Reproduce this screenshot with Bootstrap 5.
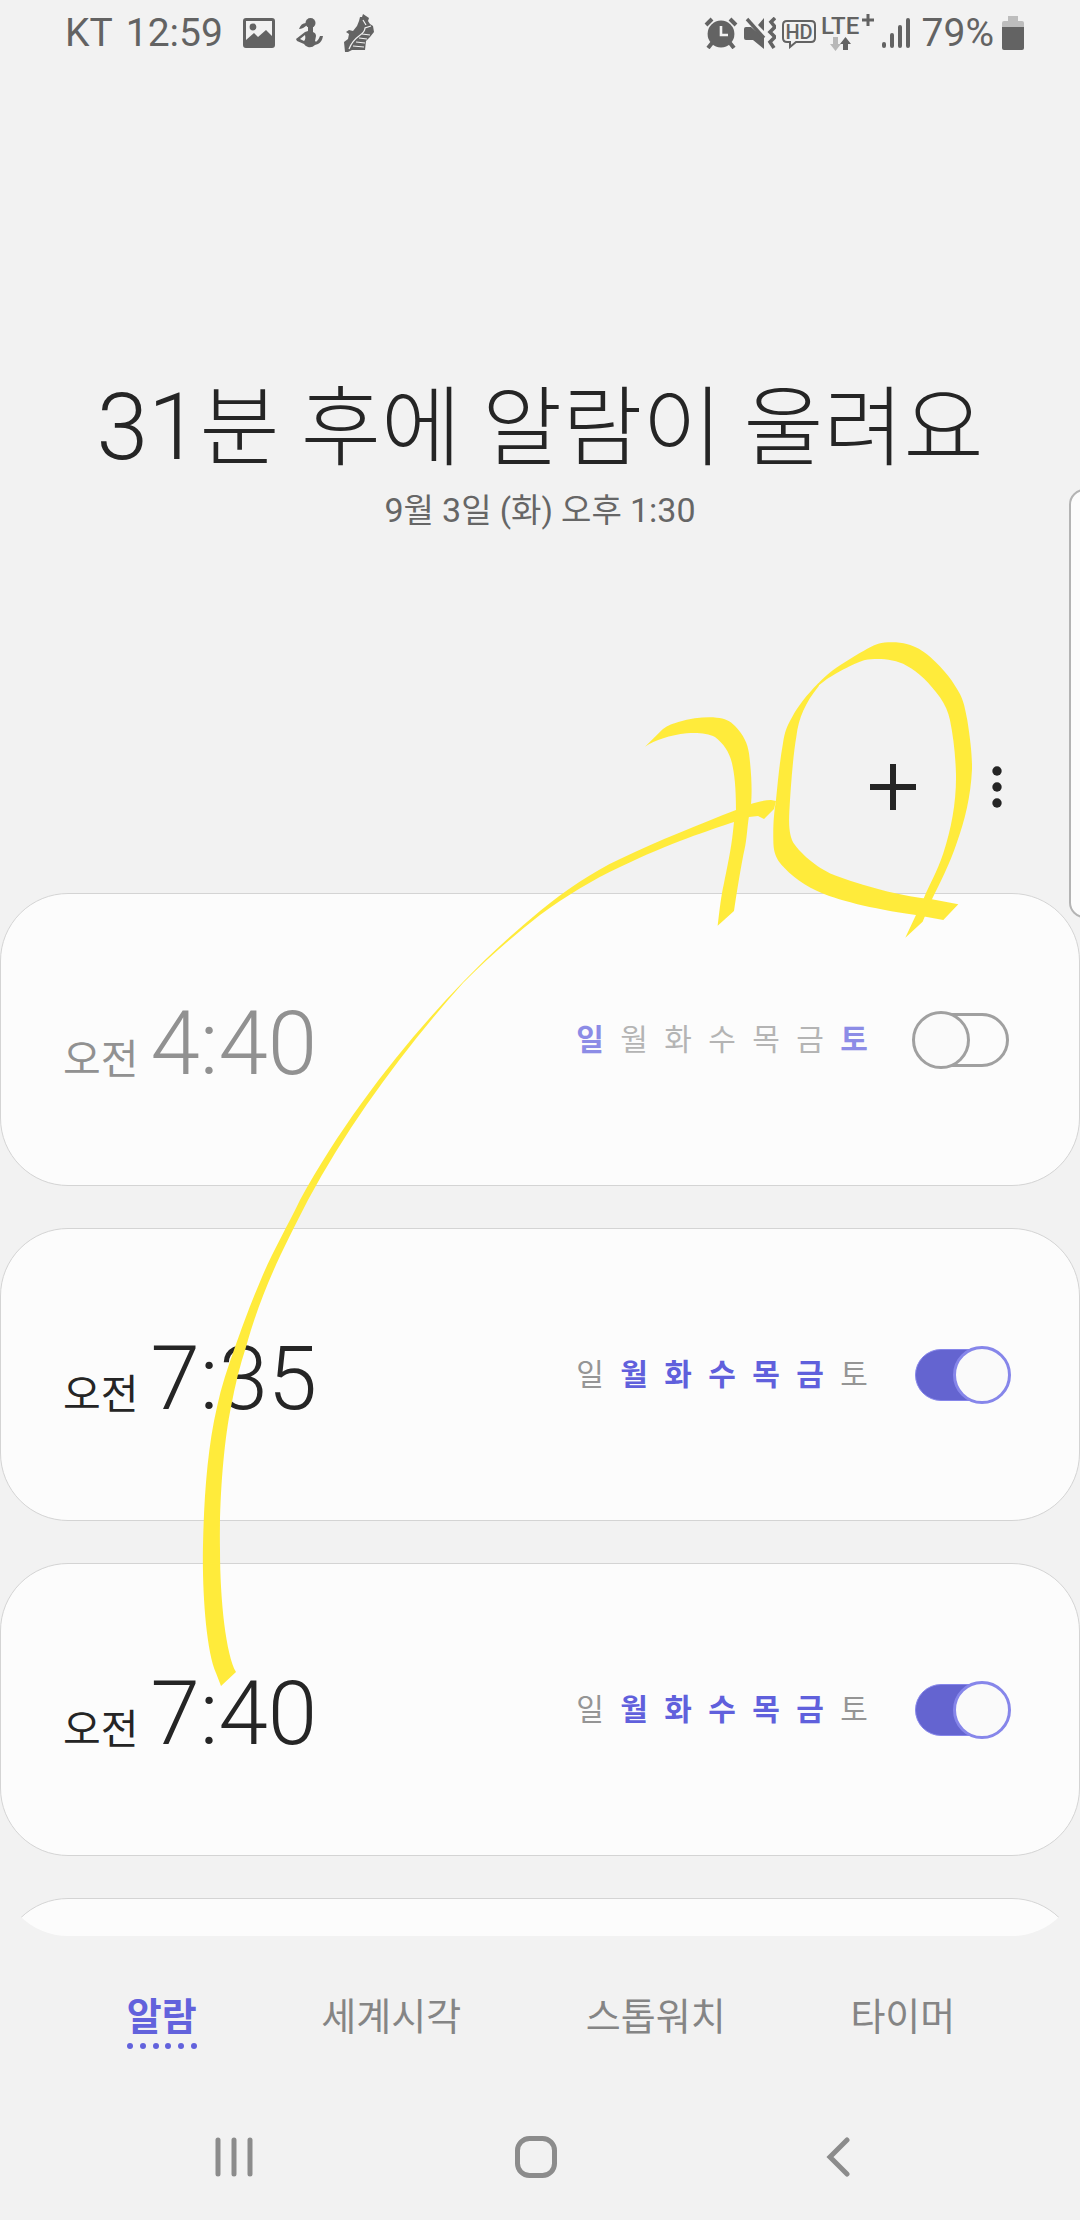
<!DOCTYPE html>
<html lang="ko">
<head>
<meta charset="utf-8">
<meta name="viewport" content="width=device-width, initial-scale=1">
<title>알람</title>
<link href="https://cdn.jsdelivr.net/npm/bootstrap@5.3.0/dist/css/bootstrap.min.css" rel="stylesheet">
<style>
  body { background: #f2f2f2; color: #252525; font-family: Roboto, "Noto Sans CJK KR", sans-serif; }
  svg { display: block; flex: none; }
  button svg { margin: auto; }
  .phone { overflow: hidden; }
  .status { height: 66px; padding: 0 56px 0 65px; color: #636363; font-size: 39px; line-height: 66px; }
  .carrier { margin-right: 13px; }
  .status-apps { gap: 21px; margin-left: 20px; }
  .status-radio { gap: 6px; margin-right: 12px; }
  .hero { padding-top: 303px; }
  .hero-title { font-size: 87px; line-height: 118px; font-weight: 300; }
  .hero-num { font-size: 93px; }
  .hero-date { font-size: 33px; line-height: 44px; color: #666; }
  .hero-date .date-num { font-size: 34px; }
  .tools { padding: 206px 47px 58px 0; gap: 32px; }
  .tool { width: 72px; height: 96px; color: #252525; }
  .alarm-list { min-height: 0; gap: 42px; border-radius: 0 0 68px 68px; }
  .alarm { height: 293px; flex: none; background: #fcfcfc; border: 1px solid #d4d4d4; border-radius: 68px; padding: 0 68px 0 62px; }
  .ampm { font-size: 41px; line-height: 100px; margin-right: 12px; }
  .clock { font-size: 89px; line-height: 100px; font-weight: 300; }
  .day { width: 44px; text-align: center; font-size: 30px; line-height: 44px; color: #959595; }
  .day-on { color: #6060dc; font-weight: 700; }
  .alarm-off { color: #919191; }
  .alarm-off .day { color: #b4b4b4; }
  .alarm-off .day-on { color: #8c8ce6; }
  .toggle { appearance: none; position: relative; width: 99px; height: 58px; margin: 0 0 0 36px; }
  .toggle::before { content: ""; position: absolute; inset: 2px 2px 2px 4px; border: 3px solid #a0a0a0; border-radius: 27px; }
  .toggle::after { content: ""; position: absolute; top: 0; left: 0; width: 58px; height: 58px; border: 3px solid #a0a0a0; border-radius: 50%; background: #fafafa; }
  .toggle:checked::before { inset: 3px; background: #6464d0; border: 1px solid #8686ea; }
  .toggle:checked::after { left: auto; right: 0; border-color: #8686ea; }
  .tabs { height: 168px; padding: 53px 0 0 2px; }
  .tab-item { font-size: 38px; line-height: 56px; color: #858585; text-decoration: none; }
  .tab-item svg { margin-top: -2px; }
  .tab-on { color: #6262dc; font-weight: 700; }
  .sysnav { height: 116px; padding: 17px 91px 27px 83px; color: #8c8c8c; }
  .sysbtn { height: 72px; color: inherit; }
  .edge { top: 489px; right: -20px; width: 31px; height: 429px; background: #fcfcfc; border: 2px solid #b4b4b4; border-radius: 16px; }
  .ink { pointer-events: none; fill: #ffeb3b; }
</style>
</head>
<body>
<div class="phone position-relative vh-100 d-flex flex-column">

  <header class="status d-flex align-items-center flex-shrink-0">
    <span class="carrier">KT</span>
    <span>12:59</span>
    <div class="status-apps d-flex align-items-center">
      <svg width="32" height="30" viewBox="0 0 32 30" fill="currentColor"><path fill-rule="evenodd" d="M3 0h26a3 3 0 0 1 3 3v24a3 3 0 0 1-3 3H3a3 3 0 0 1-3-3V3a3 3 0 0 1 3-3zM3 3v19l8-7 4 4 8-7 6 6V3z"/><circle cx="10" cy="9" r="3.4"/></svg>
      <svg width="27" height="30" viewBox="0 0 27 30" fill="currentColor"><ellipse cx="14.500" cy="5" rx="5" ry="5"/><path fill-rule="evenodd" d="M10 5Q5 5 3 11q4 0 8-4zM12 9h5v5q3 1 3 4l-1 5q1 1 2 0 2-2 3-5h3q-1 6-5 8l-3 1q-3 3-7 2-3-1-4-3L1 23l-1-2 9-7 3-1zM9 17l-5 4 4 2q2-2 1-6z"/></svg>
      <svg width="31" height="38" viewBox="0 0 31 38" fill="currentColor"><path d="M15 7l1-4 2 0 1-3 3 2 3 2-1 3 2 3 3 2 1 6-4 5-4 4-1 9H8l-4 2H1L0 28l4-3 1-5-3-2 3-2 4 1 4-5z"/><path d="M5 35Q8 27 15 22 21 18 21 14l6-2M18 20l8 1M15 24l8 1M12 28l9 1M9 32l11 1M19 6l3 5" fill="none" stroke="#f2f2f2" stroke-width="1.200"/></svg>
    </div>
    <div class="status-radio d-flex align-items-center ms-auto">
      <svg width="34" height="32" viewBox="0 0 34 32" fill="currentColor"><circle cx="17" cy="17" r="13.4"/><path d="M8 26l-4 5M26 26l4 5M2 8l6-6M26 2l6 6" stroke="currentColor" stroke-width="4"/><path d="M17 9v9h7" fill="none" stroke="#f2f2f2" stroke-width="2.6"/></svg>
      <svg width="32" height="32" viewBox="0 0 32 32" fill="currentColor"><path d="M2 10h5L20 21v11L9 23H2q-2 0-2-2v-9q0-2 2-2zM14 8l6-7v13z"/><path d="M3 2l17 19" stroke="currentColor" stroke-width="3.4"/><path d="M31 1l-4 4 4 5-5 5 5 5-5 5 4 6" fill="none" stroke="currentColor" stroke-width="3.6"/></svg>
      <svg width="34" height="32" viewBox="0 0 34 32"><path d="M5 4h24q4 0 4 4v13q0 4-4 4H14l-6 5v-5H5q-4 0-4-4V8q0-4 4-4z" fill="none" stroke="currentColor" stroke-width="2"/><text x="17" y="22" text-anchor="middle" font-size="20" font-weight="500" fill="currentColor">HD</text></svg>
      <svg width="54" height="40" viewBox="0 0 54 40"><text x="-1" y="21" font-size="24" font-weight="500" fill="currentColor">LTE</text><path d="M46 1v12M40 7h12" stroke="currentColor" stroke-width="3"/><path d="M11 24h5v7h3l-5.500 7-5.500-7h3z" fill="#b8b8b8"/><path d="M21 37h5v-6h3l-5.500-7-5.500 7h3z" fill="currentColor"/></svg>
      <svg width="28" height="32" viewBox="0 0 28 32" stroke="currentColor" stroke-width="4" stroke-linecap="round"><path d="M2 29v-2M10 29V18M18 29V10M26 29V3"/></svg>
    </div>
    <span>79%</span>
    <svg class="ms-2" width="22" height="34" viewBox="0 0 22 34"><path d="M6 0h10v5h4q2 0 2 2v5H0V7q0-2 2-2h4z" fill="#bdbdbd"/><path d="M0 11h22v21q0 2-2 2H2q-2 0-2-2z" fill="currentColor"/></svg>
  </header>

  <section class="hero text-center flex-shrink-0">
    <h1 class="hero-title mb-0"><span class="hero-num">31</span>분 후에 알람이 울려요</h1>
    <p class="hero-date mb-0"><span class="date-num">9</span>월 <span class="date-num">3</span>일 (화) 오후 <span class="date-num">1:30</span></p>
  </section>

  <div class="tools d-flex justify-content-end flex-shrink-0">
    <button type="button" class="tool btn border-0 p-0" aria-label="알람 추가">
      <svg width="46" height="46" viewBox="0 0 46 46" stroke="currentColor" stroke-width="6"><path d="M23 0v46M0 23h46"/></svg>
    </button>
    <button type="button" class="tool btn border-0 p-0" aria-label="더보기">
      <svg width="10" height="42" viewBox="0 0 10 42" fill="currentColor"><circle cx="5" cy="5" r="4.700"/><circle cx="5" cy="21" r="4.700"/><circle cx="5" cy="37" r="4.700"/></svg>
    </button>
  </div>

  <main class="alarm-list d-flex flex-column flex-fill overflow-hidden">
    <article class="alarm alarm-off d-flex align-items-center">
      <label class="d-flex align-items-baseline mt-4" for="a1"><span class="ampm">오전</span><span class="clock">4:40</span></label>
      <div class="d-flex ms-auto"><span class="day day-on">일</span><span class="day">월</span><span class="day">화</span><span class="day">수</span><span class="day">목</span><span class="day">금</span><span class="day day-on">토</span></div>
      <input class="toggle" type="checkbox" role="switch" id="a1">
    </article>
    <article class="alarm d-flex align-items-center">
      <label class="d-flex align-items-baseline mt-4" for="a2"><span class="ampm">오전</span><span class="clock">7:35</span></label>
      <div class="d-flex ms-auto"><span class="day">일</span><span class="day day-on">월</span><span class="day day-on">화</span><span class="day day-on">수</span><span class="day day-on">목</span><span class="day day-on">금</span><span class="day">토</span></div>
      <input class="toggle" type="checkbox" role="switch" id="a2" checked>
    </article>
    <article class="alarm d-flex align-items-center">
      <label class="d-flex align-items-baseline mt-4" for="a3"><span class="ampm">오전</span><span class="clock">7:40</span></label>
      <div class="d-flex ms-auto"><span class="day">일</span><span class="day day-on">월</span><span class="day day-on">화</span><span class="day day-on">수</span><span class="day day-on">목</span><span class="day day-on">금</span><span class="day">토</span></div>
      <input class="toggle" type="checkbox" role="switch" id="a3" checked>
    </article>
    <article class="alarm"></article>
  </main>

  <nav class="tabs d-flex justify-content-evenly align-items-start flex-shrink-0">
    <a class="tab-item tab-on" href="#">알람
      <svg class="mx-auto" width="70" height="6" viewBox="0 0 70 6" fill="currentColor"><circle cx="3" cy="3" r="3"/><circle cx="16" cy="3" r="3"/><circle cx="29" cy="3" r="3"/><circle cx="41" cy="3" r="3"/><circle cx="54" cy="3" r="3"/><circle cx="67" cy="3" r="3"/></svg>
    </a>
    <a class="tab-item" href="#">세계시각</a>
    <a class="tab-item" href="#">스톱워치</a>
    <a class="tab-item" href="#">타이머</a>
  </nav>

  <footer class="sysnav row g-0 flex-shrink-0">
    <button type="button" class="sysbtn col btn border-0 p-0" aria-label="최근 앱"><svg width="38" height="40" viewBox="0 0 38 40" stroke="currentColor" stroke-width="5" stroke-linecap="round"><path d="M3 3v34M19 3v34M35 3v34"/></svg></button>
    <button type="button" class="sysbtn col btn border-0 p-0" aria-label="홈"><svg width="42" height="42" viewBox="0 0 42 42" fill="none" stroke="currentColor" stroke-width="5"><rect x="2.500" y="2.500" width="37" height="37" rx="12"/></svg></button>
    <button type="button" class="sysbtn col btn border-0 p-0" aria-label="뒤로"><svg width="24" height="40" viewBox="0 0 24 40" fill="none" stroke="currentColor" stroke-width="5" stroke-linecap="round"><path d="M21 3L4 20l17 17"/></svg></button>
  </footer>

  <div class="edge position-absolute"></div>

  <!-- highlighter strokes drawn over the screen -->
  <svg class="ink position-absolute top-0 start-0 w-100 h-100" viewBox="0 0 1080 2220" preserveAspectRatio="xMinYMin meet">
    <path d="M776 801L771 800C760 800 744 806 736 810C700 824 660 840 620 859C592 872 566 890 540 911C512 934 486 958 463 982C405 1042 345 1118 300 1200C287 1227 272 1253 262 1277C250 1305 242 1328 235 1347C228 1367 221 1387 217 1407C207 1450 204 1500 203 1545C202 1590 206 1650 216 1673L221 1686L236 1672C226 1655 220 1600 220 1550C219 1500 224 1440 231 1407C235 1385 240 1365 246 1347C262 1290 280 1255 308 1200C350 1122 405 1048 463 983C486 960 512 937 540 915C566 896 592 880 620 867C670 843 710 830 734 822L749 817L758 816L764 819L774 809Z"/>
    <g transform="translate(620 620) scale(.3333)">
      <path d="M75 380L128 328C140 318 150 314 175 306C220 293 260 290 290 293C315 295 330 302 345 318C370 344 383 370 387 400C396 470 396 520 393 555L386 595C380 640 380 665 370 705C356 780 350 820 342 873L293 917C300 860 303 830 312 790C328 710 335 680 342 605L348 570C348 500 343 460 336 430C328 395 310 370 285 351C265 340 230 337 200 340C150 346 105 360 75 380Z"/>
      <path d="M593 192C625 158 650 142 690 117C730 92 760 75 775 71C800 65 840 66 860 72C890 80 905 90 930 110C975 150 1000 185 1020 222C1032 245 1036 270 1042 300C1052 365 1057 410 1056 450C1052 530 1035 600 1010 670C990 730 960 790 936 838L908 905L856 953L888 885L912 833C930 790 950 760 970 700C995 625 1010 540 1008 460C1006 400 1000 350 990 300C985 275 975 255 960 232C930 190 895 155 860 137C820 115 770 115 735 120C710 126 650 158 620 178L595 197Z"/>
      <path d="M595 190C560 225 535 258 517 290C500 320 494 335 489 370C480 420 475 470 468 540C462 580 459 610 460 660C460 690 465 705 475 722C495 750 540 790 590 812C650 840 750 865 888 885L970 900L1015 853L936 838C850 828 760 808 650 768C600 750 545 705 520 668C505 640 507 600 508 575C512 500 520 400 529 350C537 290 555 250 597 197Z"/>
    </g>
  </svg>
</div>
<script src="https://cdn.jsdelivr.net/npm/bootstrap@5.3.0/dist/js/bootstrap.bundle.min.js"></script>
</body>
</html>
